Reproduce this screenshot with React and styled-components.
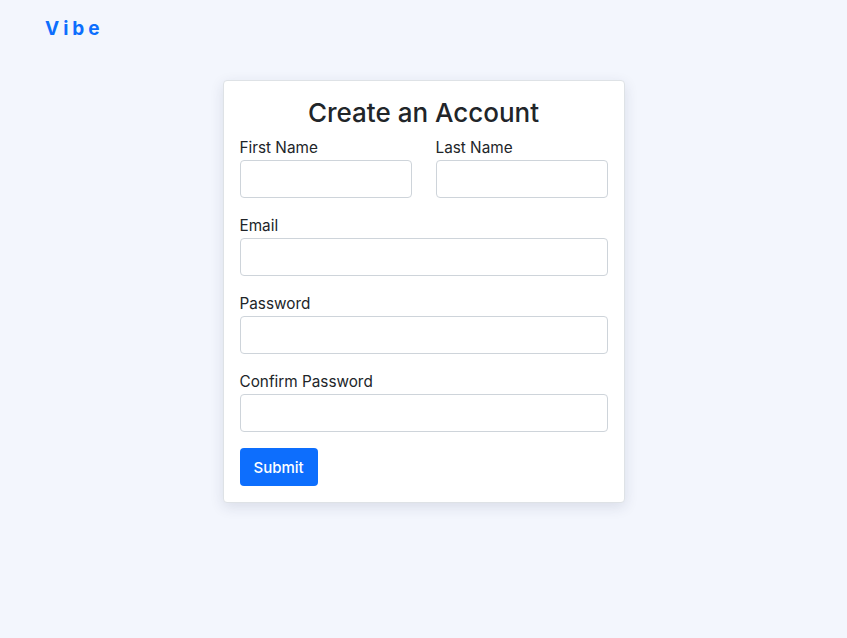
import React from "react";
import styled, { createGlobalStyle } from "styled-components";

const GlobalStyle = createGlobalStyle`
  * { box-sizing: border-box; }
  body {
    margin: 0;
    background: #f3f6fd;
    font-family: Inter, "Noto Sans", sans-serif;
    color: #212529;
  }
`;

const Page = styled.div`
  min-height: 638px;
`;

const Header = styled.header`
  height: 56px;
  padding: 17px 45px 0;
`;

const Logo = styled.div`
  color: #0d6efd;
  font-size: 19px;
  font-weight: 700;
  letter-spacing: 4px;
  line-height: 24px;
`;

const Card = styled.form`
  width: 402px;
  margin: 24px auto 0;
  padding: 16px;
  background: #fff;
  border: 1px solid #dee2e6;
  border-radius: 4px;
  box-shadow: 0 4px 14px rgba(30, 40, 80, 0.12);
`;

const Title = styled.h2`
  margin: 0 0 8px;
  text-align: center;
  font-size: 26px;
  font-weight: 500;
  line-height: 31px;
`;

const Row = styled.div`
  display: grid;
  grid-template-columns: 1fr 1fr;
  column-gap: 24px;
`;

const Group = styled.div`
  margin-bottom: 16px;
`;

const Label = styled.label`
  display: block;
  font-size: 15.3px;
  line-height: 21px;
  padding-top: 1px;
  margin-bottom: 2px;
`;

const Input = styled.input`
  display: block;
  width: 100%;
  height: 38px;
  border: 1px solid #ced4da;
  border-radius: 4px;
  background: #fff;
  font: inherit;
  padding: 0 12px;
`;

const Button = styled.button`
  height: 38px;
  padding: 0 14px;
  border: none;
  border-radius: 4px;
  background: #0d6efd;
  color: #fff;
  font: inherit;
  font-size: 15px;
  font-weight: 500;
`;

const Field = ({ label, type = "text" }) => (
  <Group>
    <Label>{label}</Label>
    <Input type={type} />
  </Group>
);

export default function App() {
  return (
    <Page>
      <GlobalStyle />
      <Header>
        <Logo>Vibe</Logo>
      </Header>
      <Card onSubmit={(e) => e.preventDefault()}>
        <Title>Create an Account</Title>
        <Row>
          <Field label="First Name" />
          <Field label="Last Name" />
        </Row>
        <Field label="Email" type="email" />
        <Field label="Password" type="password" />
        <Field label="Confirm Password" type="password" />
        <Button type="submit">Submit</Button>
      </Card>
    </Page>
  );
}
